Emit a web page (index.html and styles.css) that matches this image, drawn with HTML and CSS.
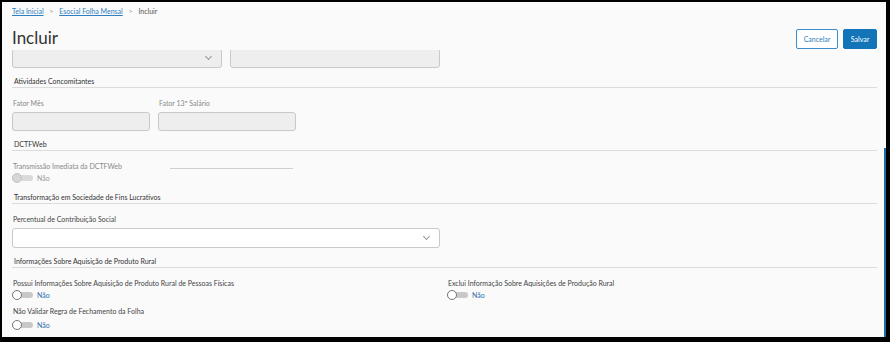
FILE: index.html
```html
<html><head>
<meta charset="UTF-8">
<meta name="viewport" content="width=device-width, initial-scale=1.0">
<title>Incluir</title>
<link rel="stylesheet" href="styles.css">
</head>
<body>
  <div class="frame">
    <div class="header">
      <div class="header-left">
        <div class="breadcrumb">
          <a href="#">Tela Inicial</a>
          <span class="sep">&gt;</span>
          <a href="#">Esocial Folha Mensal</a>
          <span class="sep">&gt;</span>
          <span class="current">Incluir</span>
        </div>
        <h1>Incluir</h1>
      </div>
      <div class="actions">
        <button class="btn btn-outline">Cancelar</button>
        <button class="btn btn-primary">Salvar</button>
      </div>
    </div>

    <div class="content">
      <div class="form">
        <div class="row">
          <div class="field select disabled w-210"><span class="chevron"></span></div>
          <div class="field disabled w-210"></div>
        </div>

        <div class="section">Atividades Concomitantes</div>
        <div class="row">
          <div class="group">
            <label>Fator Mês</label>
            <div class="field small disabled w-138"></div>
          </div>
          <div class="group">
            <label>Fator 13º Salário</label>
            <div class="field small disabled w-138"></div>
          </div>
        </div>

        <div class="section">DCTFWeb</div>
        <div class="group toggle-group">
          <div class="label-line">
            <label>Transmissão Imediata da DCTFWeb</label>
            <span class="underline"></span>
          </div>
          <div class="toggle disabled"><span class="track"><span class="knob"></span></span><span class="toggle-text">Não</span></div>
        </div>

        <div class="section">Transformação em Sociedade de Fins Lucrativos</div>
        <div class="group">
          <label class="dark">Percentual de Contribuição Social</label>
          <div class="field select w-428"><span class="chevron"></span></div>
        </div>

        <div class="section">Informações Sobre Aquisição de Produto Rural</div>
        <div class="two-col">
          <div class="group toggle-group">
            <label class="dark">Possui Informações Sobre Aquisição de Produto Rural de Pessoas Físicas</label>
            <div class="toggle"><span class="track"><span class="knob"></span></span><span class="toggle-text">Não</span></div>
          </div>
          <div class="group toggle-group">
            <label class="dark">Exclui Informação Sobre Aquisições de Produção Rural</label>
            <div class="toggle"><span class="track"><span class="knob"></span></span><span class="toggle-text">Não</span></div>
          </div>
        </div>
        <div class="group toggle-group stacked">
          <label class="dark">Não Validar Regra de Fechamento da Folha</label>
          <div class="toggle"><span class="track"><span class="knob"></span></span><span class="toggle-text">Não</span></div>
        </div>
      </div>
      <div class="scrollbar"></div>
    </div>
  </div>
</body>
</html>
```

FILE: styles.css
```css
body {
  margin: 0;
  background-color: #000000;
  font-family: Lato, "Open Sans", sans-serif;
}
.frame {
  margin: 2px 4px 0 2px;
  height: 335px;
  background-color: #fafafa;
  display: flex;
  flex-direction: column;
  overflow: hidden;
}
.header {
  display: flex;
  justify-content: space-between;
  align-items: flex-start;
  height: 48px;
  padding: 0 9px 0 10px;
  flex-shrink: 0;
}
.breadcrumb {
  font-size: 7px;
  margin-top: 5px;
  color: #555;
}
.breadcrumb a {
  color: #2d7fc1;
  text-decoration: underline;
}
.breadcrumb .sep {
  color: #999;
  margin: 0 4px;
}
h1 {
  font-size: 17px;
  font-weight: 400;
  color: #333;
  margin: 12px 0 0 0;
}
.actions {
  display: flex;
  gap: 5px;
  margin-top: 27px;
}
.btn {
  font-family: Lato, sans-serif;
  font-size: 7px;
  height: 20px;
  padding: 0 6px;
  border-radius: 2px;
  cursor: pointer;
}
.btn-outline {
  background-color: #ffffff;
  border: 1px solid #3c8dc9;
  color: #2d7fc1;
  width: 42px;
}
.btn-primary {
  background-color: #1374b8;
  border: 1px solid #1374b8;
  color: #ffffff;
  width: 34px;
}
.content {
  position: relative;
  flex: 1;
  overflow: hidden;
}
.form {
  padding: 0 9px 0 10px;
  margin-top: -2px;
}
.row {
  display: flex;
  gap: 8px;
}
.field {
  height: 18px;
  border: 1px solid #c9c9c9;
  border-radius: 3px;
  background-color: #ffffff;
  box-sizing: content-box;
  position: relative;
}
.field.small {
  height: 17px;
}
.field.disabled {
  background-color: #eeeeee;
}
.w-210 { width: 208px; }
.w-138 { width: 136px; }
.w-428 { width: 426px; }
.chevron {
  position: absolute;
  right: 10px;
  top: 5px;
  width: 4px;
  height: 4px;
  border-right: 1px solid #999;
  border-bottom: 1px solid #999;
  transform: rotate(45deg);
}
.section {
  font-size: 7px;
  line-height: 10px;
  color: #333;
  margin-top: 8px;
  padding: 0 0 1px 2px;
  border-bottom: 1px solid #dcdcdc;
}
.group {
  display: flex;
  flex-direction: column;
}
label {
  font-size: 7px;
  line-height: 10px;
  color: #888;
  margin: 10px 0 4px 1px;
}
label.dark {
  color: #444;
}
.toggle-group label {
  margin-bottom: 2px;
}
.stacked label {
  margin-top: 5px;
  margin-bottom: 4px;
}
.label-line {
  display: flex;
  align-items: flex-start;
}
.underline {
  width: 123px;
  margin: 17px 0 0 48px;
  border-bottom: 1px solid #cfcfcf;
}
.toggle {
  display: flex;
  align-items: center;
  height: 10px;
  margin-bottom: 1px;
}
.track {
  position: relative;
  width: 21px;
  height: 6px;
  border-radius: 3px;
  background-color: #c8c8c8;
}
.knob {
  position: absolute;
  left: 0;
  top: -2px;
  width: 8px;
  height: 8px;
  border-radius: 50%;
  background-color: #ffffff;
  border: 1px solid #777;
}
.toggle.disabled .track {
  background-color: #dadada;
}
.toggle.disabled .knob {
  background-color: #d6d6d6;
  border-color: #c4c4c4;
}
.toggle-text {
  font-size: 7px;
  line-height: 10px;
  color: #2d6fa8;
  margin-left: 4px;
}
.toggle.disabled .toggle-text {
  color: #999;
}
.two-col {
  display: grid;
  grid-template-columns: 435px 1fr;
}
.scrollbar {
  position: absolute;
  right: 0;
  top: 98px;
  width: 2px;
  height: 200px;
  background-color: #1a6fb0;
}
```
